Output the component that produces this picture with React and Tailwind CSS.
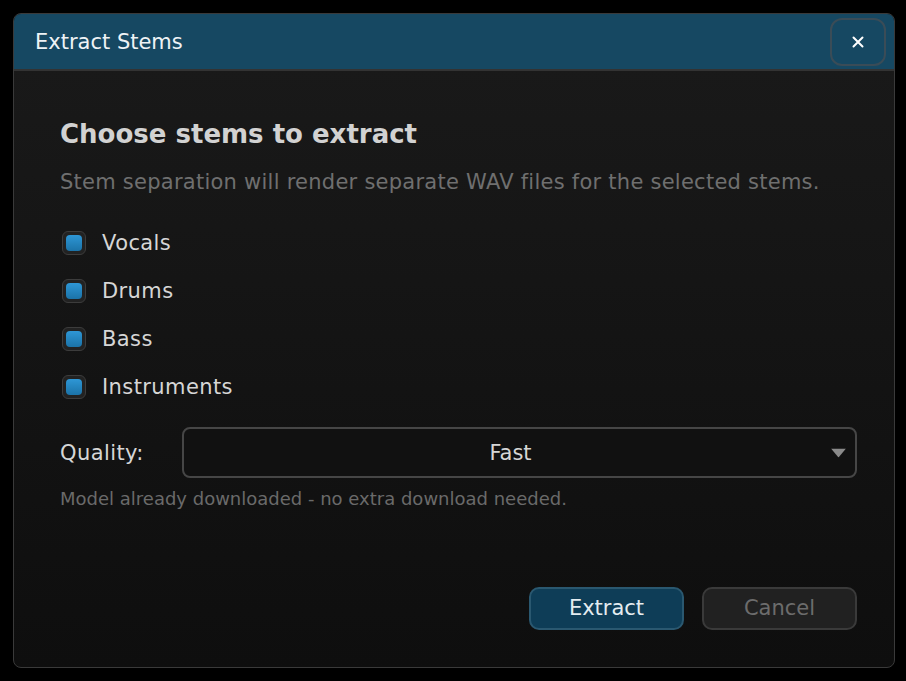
import { useState } from 'react'

const STEMS = ['Vocals', 'Drums', 'Bass', 'Instruments']

function StemCheckbox({ label, checked, onToggle }) {
  return (
    <label className="flex h-12 cursor-pointer items-center gap-4 pl-[2px]">
      <span className="flex h-6 w-6 shrink-0 items-center justify-center rounded-[6px] border border-[#3c3c3c] bg-[#222]">
        {checked && (
          <span className="h-4 w-4 rounded-[4px] bg-gradient-to-b from-[#2e97d6] to-[#1b73a8]" />
        )}
      </span>
      <input type="checkbox" className="hidden" checked={checked} onChange={onToggle} />
      <span className="text-[21px] leading-7 tracking-[0.4px] text-[#d6d6d6]">{label}</span>
    </label>
  )
}

export default function App() {
  const [selected, setSelected] = useState(() => Object.fromEntries(STEMS.map((s) => [s, true])))

  const toggle = (name) => setSelected((prev) => ({ ...prev, [name]: !prev[name] }))

  return (
    <div
      className="flex h-[681px] w-[906px] bg-black p-[13px]"
      style={{ fontFamily: '"DejaVu Sans", Verdana, sans-serif' }}
    >
      <div className="flex h-[655px] w-[882px] shrink-0 flex-col overflow-hidden rounded-[8px] border border-[#3a3a3a] bg-gradient-to-b from-[#1a1a1a] to-[#0e0e0e]">
        {/* title bar */}
        <div className="flex h-[57px] shrink-0 items-center justify-between border-b-2 border-[#333] bg-[#164862] pl-[21px] pr-[8px]">
          <h1 className="text-[21px] leading-7 text-[#eef3f6]">Extract Stems</h1>
          <button className="flex h-[48px] w-[56px] items-center justify-center rounded-[12px] border-2 border-[#3a4c57] text-white">
            <svg width="12" height="12" viewBox="0 0 12 12" fill="none" stroke="currentColor" strokeWidth="2" strokeLinecap="round">
              <path d="M1.5 1.5l9 9M10.5 1.5l-9 9" />
            </svg>
          </button>
        </div>

        {/* body */}
        <div className="flex flex-1 flex-col pb-[37px] pl-[46px] pr-[37px] pt-[47px]">
          <h2 className="text-[26px] font-bold leading-8 text-[#d2d2d2]">Choose stems to extract</h2>
          <p className="mt-[18px] text-[21px] leading-7 tracking-[0.25px] text-[#6f6f6f]">
            Stem separation will render separate WAV files for the selected stems.
          </p>

          <div className="mt-[23px] flex flex-col">
            {STEMS.map((s) => (
              <StemCheckbox key={s} label={s} checked={selected[s]} onToggle={() => toggle(s)} />
            ))}
          </div>

          <div className="mt-4 flex items-center">
            <span className="w-[122px] shrink-0 text-[21px] leading-7 tracking-[0.4px] text-[#d6d6d6]">Quality:</span>
            <div className="relative flex h-[51px] flex-1 items-center justify-center rounded-[8px] border-2 border-[#464646] bg-[#111] pr-[18px]">
              <span className="text-[21px] leading-7 text-[#d6d6d6]">Fast</span>
              <svg className="absolute right-[9px] top-1/2 -translate-y-1/2" width="15" height="9" viewBox="0 0 15 9">
                <path d="M0 0h15L7.5 9z" fill="#8a8a8a" />
              </svg>
            </div>
          </div>

          <p className="mt-[9px] text-[18px] leading-6 text-[#6a6a6a]">
            Model already downloaded - no extra download needed.
          </p>

          <div className="mt-auto flex justify-end gap-[18px]">
            <button className="h-[43px] w-[155px] rounded-[10px] border-2 border-[#2a5870] bg-[#0e3d57] text-[21px] text-[#e4ecf0]">
              Extract
            </button>
            <button className="h-[43px] w-[155px] rounded-[10px] border-2 border-[#3a3a3a] bg-[#212121] text-[21px] text-[#6c6c6c]">
              Cancel
            </button>
          </div>
        </div>
      </div>
    </div>
  )
}
